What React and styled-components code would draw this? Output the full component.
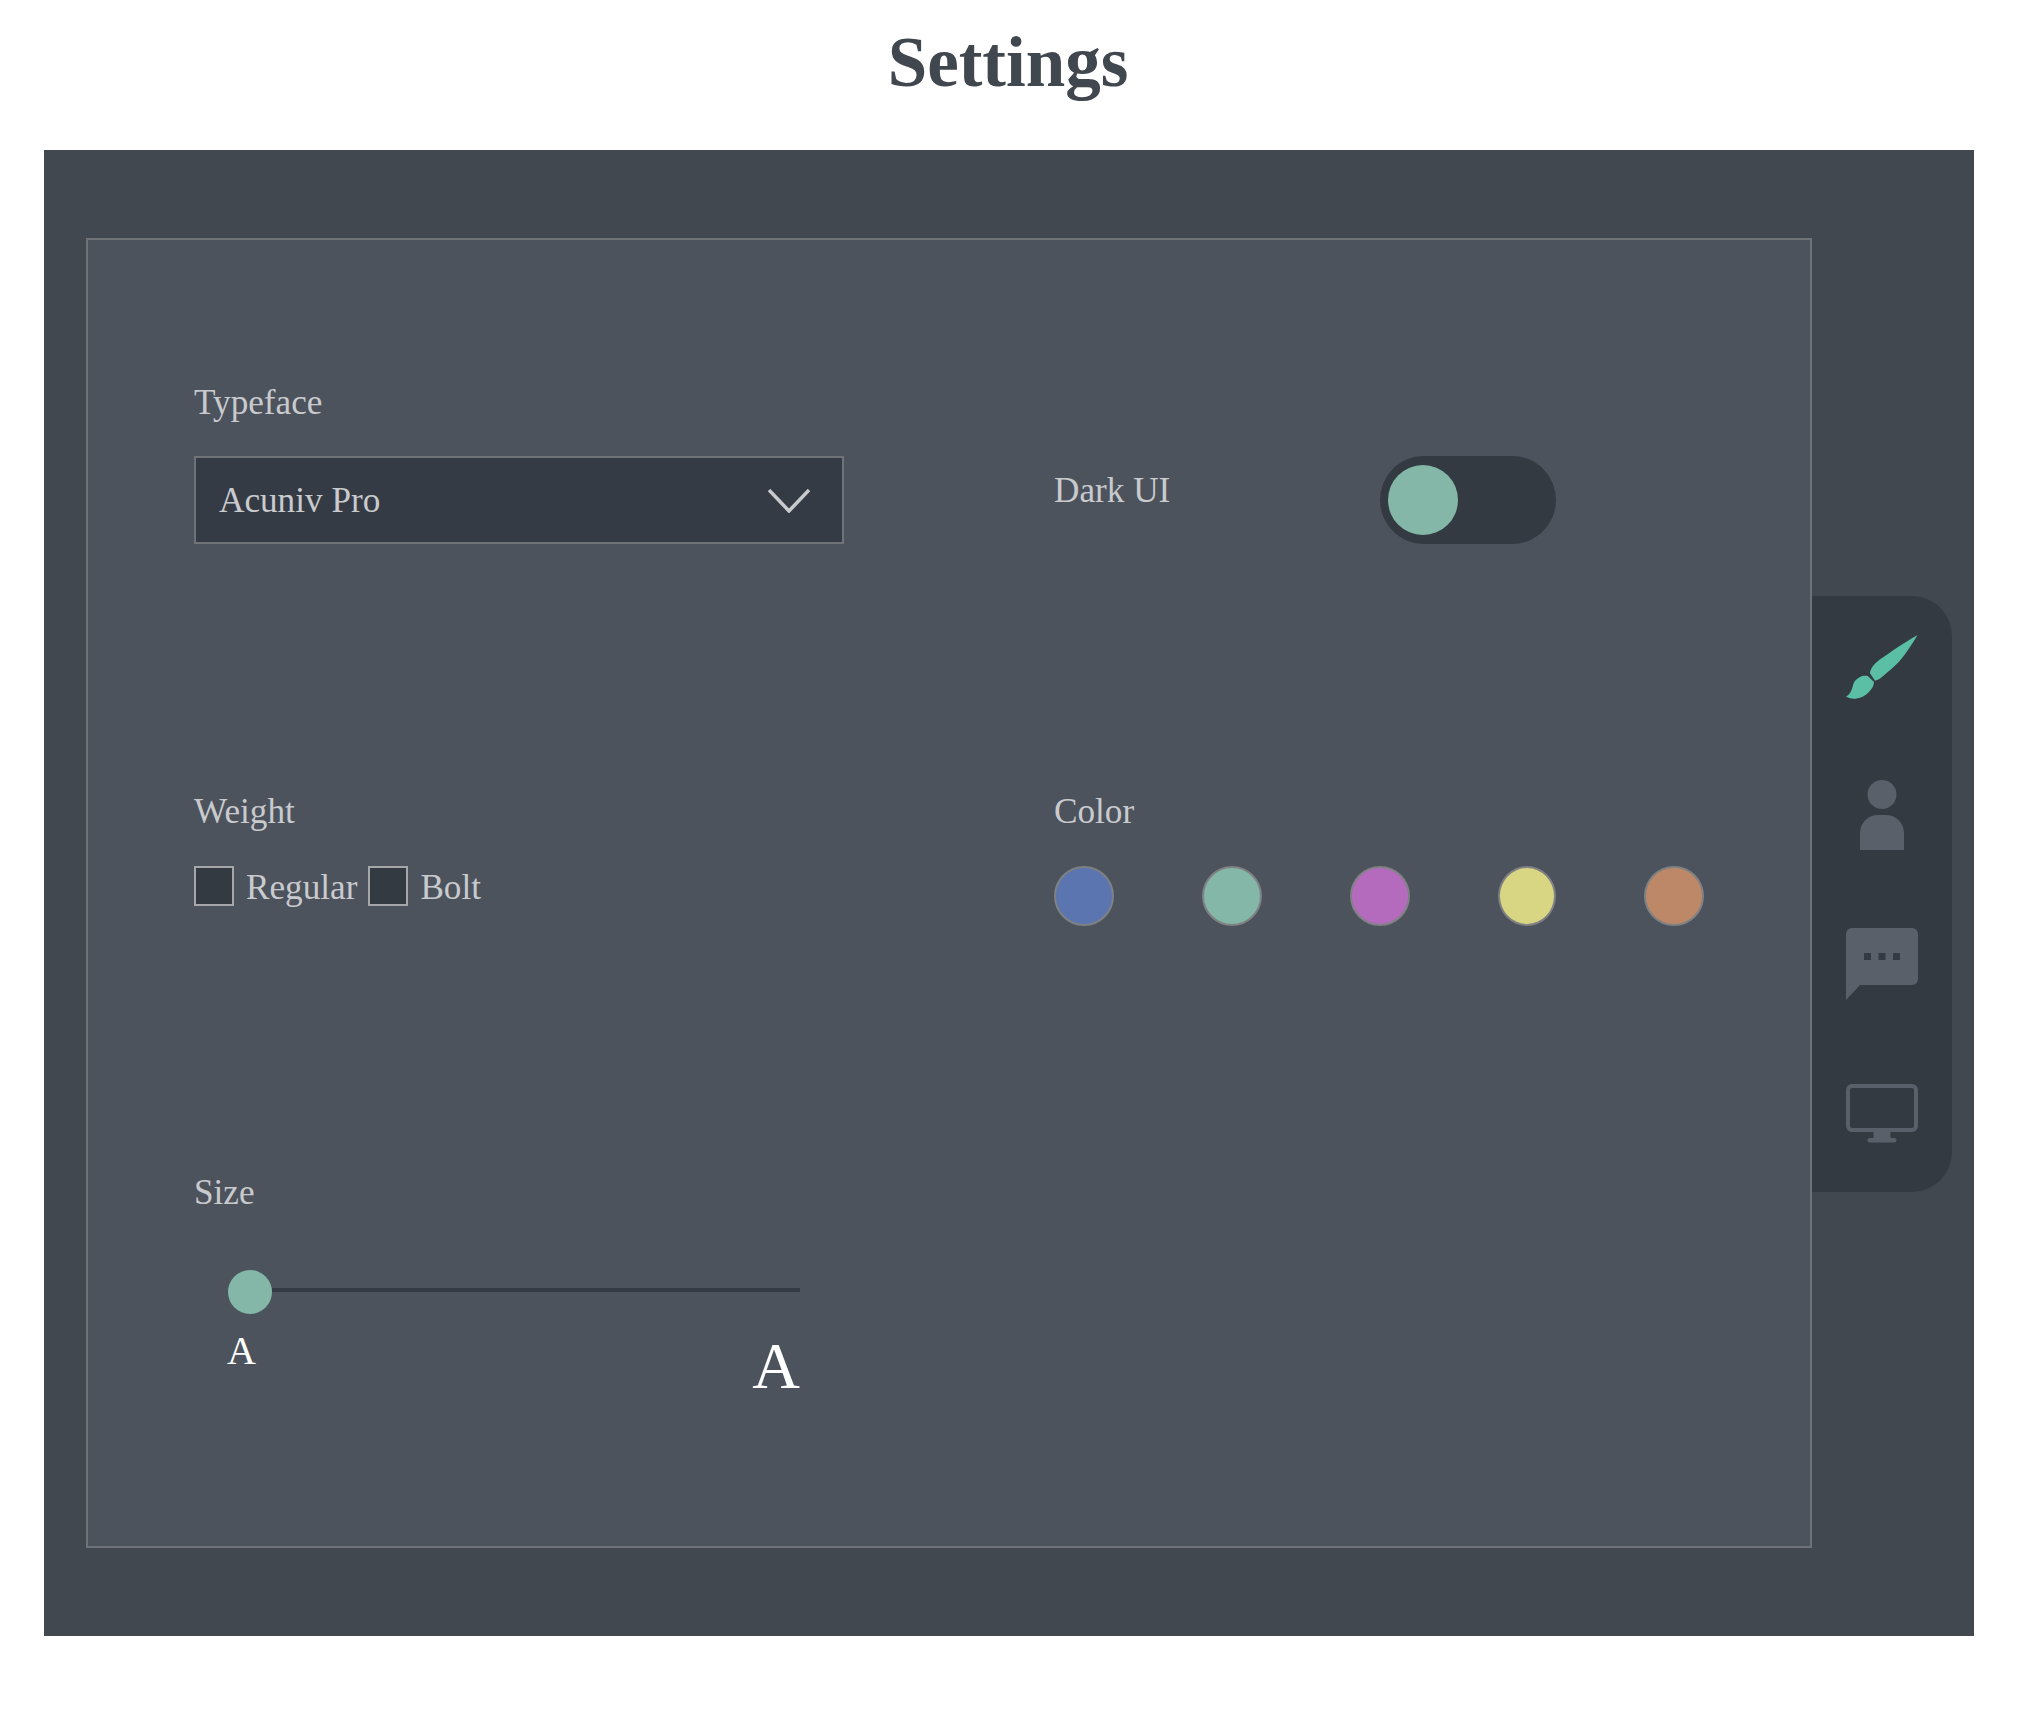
import styled, { createGlobalStyle } from 'styled-components';

const GlobalStyle = createGlobalStyle`
	body {
		margin: 0;
		background-color: #ffffff;
		font-family: 'Liberation Serif', 'Times New Roman', serif;
	}
`;

const Page = styled.div`
	width: 2022px;
	height: 1730px;
	overflow: hidden;
`;

const Title = styled.h1`
	margin: 0;
	height: 150px;
	padding: 22px 6px 0 0;
	box-sizing: border-box;
	text-align: center;
	font-size: 71px;
	line-height: 80px;
	font-weight: 700;
	color: #41474f;
`;

const Panel = styled.div`
	display: flex;
	align-items: flex-start;
	margin: 0 48px 0 44px;
	height: 1486px;
	padding: 88px 22px 0 42px;
	box-sizing: border-box;
	background-color: #42484f;
`;

const Card = styled.div`
	display: grid;
	grid-template-columns: 860px 1fr;
	grid-template-rows: 409px 381px 1fr;
	width: 1726px;
	height: 1310px;
	padding: 142px 0 0 106px;
	box-sizing: border-box;
	border: 2px solid #6f7277;
	background-color: #4c535d;
`;

const Field = styled.div`
	display: flex;
	flex-direction: column;
	align-items: flex-start;
`;

const Label = styled.div`
	padding-top: 1px;
	font-size: 35.2px;
	line-height: 40px;
	color: #c9cacd;
`;

const Select = styled.div`
	display: flex;
	align-items: center;
	justify-content: space-between;
	width: 650px;
	height: 88px;
	margin-top: 33px;
	padding: 2px 32px 0 23px;
	box-sizing: border-box;
	border: 2px solid #6f7277;
	background-color: #353b45;
	font-size: 35.2px;
	color: #c9cacd;
`;

const ToggleRow = styled.div`
	display: flex;
	align-items: flex-start;
	margin-top: 74px;
`;

const ToggleLabel = styled(Label)`
	width: 326px;
	padding-top: 15px;
`;

const Toggle = styled.div`
	display: flex;
	align-items: center;
	width: 176px;
	height: 88px;
	padding-left: 8px;
	box-sizing: border-box;
	border-radius: 44px;
	background-color: #343a42;
`;

const Knob = styled.div`
	width: ${props => props.$size}px;
	height: ${props => props.$size}px;
	border-radius: 50%;
	background-color: #84b7a7;
`;

const WeightRow = styled.div`
	display: flex;
	align-items: center;
	margin-top: 34px;
	font-size: 35.2px;
	color: #c9cacd;
`;

const Checkbox = styled.div`
	width: 40px;
	height: 40px;
	margin: -2px 12px 0 0;
	box-sizing: border-box;
	border: 2px solid #a5a7aa;
	background-color: #343a42;
`;

const WeightName = styled.span`
	padding-top: 2px;
	margin-right: 11px;
`;

const Swatches = styled.div`
	display: flex;
	gap: 88px;
	margin-top: 34px;
`;

const Swatch = styled.div`
	width: ${props => props.$width}px;
	height: 60px;
	box-sizing: border-box;
	border: 2px solid #7f8183;
	border-radius: 50%;
	background-color: ${props => props.$color};
`;

const Slider = styled.div`
	display: flex;
	align-items: center;
	width: 572px;
	margin-top: 57px;
	padding-left: 34px;
`;

const Track = styled.div`
	flex: 1;
	height: 4px;
	margin-top: -4px;
	background-color: #353b45;
`;

const SizeLetters = styled.div`
	display: flex;
	align-items: flex-start;
	justify-content: space-between;
	width: 573px;
	margin: 14px 0 0 33px;
	color: #ffffff;
`;

const SmallA = styled.span`
	font-size: 40px;
	line-height: 46px;
`;

const BigA = styled.span`
	font-size: 66px;
	line-height: 76px;
`;

const Sidebar = styled.nav`
	display: flex;
	flex-direction: column;
	align-items: center;
	width: 140px;
	height: 596px;
	margin-top: 358px;
	padding-top: 39px;
	box-sizing: border-box;
	border-radius: 0 40px 40px 0;
	background-color: #343a42;
`;

const NavItem = styled.div`
	height: ${props => props.$height}px;
`;

const Icon = styled.svg`
	display: block;
`;

const BrushIcon = () => (
	<Icon width="72" height="64" viewBox="0 0 72 64">
		<path
			fill="#5bbfa6"
			d="M71.5 0C60 7 50 13 43 18.300 36 23 30 27 27 31c-2 3-3 5-3 7.300L29 45.700c3-.7 5-2.200 7.300-4C43 36 49 31 53 26.700 60 19 66 9 71.500 0Z"
		/>
		<path
			fill="#5bbfa6"
			d="M21.800 41C18 40.500 16 41 14 42 10.500 44 8.500 46 7.500 48.500 6 54 5 59 0 61.500c4 2.200 7 2.500 10.500 2 5-.5 9-3 11.500-5.500C25.500 54.500 28 51 28 47Z"
		/>
	</Icon>
);

const PersonIcon = () => (
	<Icon width="44" height="70" viewBox="0 0 44 70">
		<circle cx="22" cy="14.500" r="14.500" fill="#5a6069" />
		<path fill="#5a6069" d="M0 70V53a18 18 0 0 1 18-18h8a18 18 0 0 1 18 18v17Z" />
	</Icon>
);

const ChatIcon = () => (
	<Icon width="72" height="72" viewBox="0 0 72 72">
		<path
			fill="#5a6069"
			d="M6 0h60a6 6 0 0 1 6 6v45a6 6 0 0 1-6 6H14L0 72V6a6 6 0 0 1 6-6Z"
		/>
		<rect x="18" y="25" width="7" height="7" fill="#343a42" />
		<rect x="32.500" y="25" width="7" height="7" fill="#343a42" />
		<rect x="47" y="25" width="7" height="7" fill="#343a42" />
	</Icon>
);

const MonitorIcon = () => (
	<Icon width="72" height="59" viewBox="0 0 72 59">
		<rect x="2" y="2" width="68" height="44" rx="4" fill="none" stroke="#5a6069" strokeWidth="4" />
		<rect x="27.500" y="48" width="17" height="6" fill="#5a6069" />
		<rect x="21.500" y="54" width="29" height="4.500" rx="2" fill="#5a6069" />
	</Icon>
);

const swatches = [
	{ color: '#5a75b0', width: 60 },
	{ color: '#84b7a7', width: 60 },
	{ color: '#b56bbd', width: 60 },
	{ color: '#d9d683', width: 58 },
	{ color: '#bc8867', width: 60 },
];

const App = () => {
	return (
		<Page>
			<GlobalStyle />
			<Title>Settings</Title>
			<Panel>
				<Card>
					<Field>
						<Label>Typeface</Label>
						<Select>
							Acuniv Pro
							<svg width="42" height="24" viewBox="0 0 42 24">
								<polyline points="1,1 21,22 41,1" fill="none" stroke="#c9cacd" strokeWidth="3.500" />
							</svg>
						</Select>
					</Field>
					<Field>
						<ToggleRow>
							<ToggleLabel>Dark UI</ToggleLabel>
							<Toggle>
								<Knob $size={70} />
							</Toggle>
						</ToggleRow>
					</Field>
					<Field>
						<Label>Weight</Label>
						<WeightRow>
							<Checkbox />
							<WeightName>Regular</WeightName>
							<Checkbox />
							<WeightName>Bolt</WeightName>
						</WeightRow>
					</Field>
					<Field>
						<Label>Color</Label>
						<Swatches>
							{swatches.map(swatch => (
								<Swatch key={swatch.color} $color={swatch.color} $width={swatch.width} />
							))}
						</Swatches>
					</Field>
					<Field>
						<Label>Size</Label>
						<Slider>
							<Knob $size={44} />
							<Track />
						</Slider>
						<SizeLetters>
							<SmallA>A</SmallA>
							<BigA>A</BigA>
						</SizeLetters>
					</Field>
				</Card>
				<Sidebar>
					<NavItem $height={145}>
						<BrushIcon />
					</NavItem>
					<NavItem $height={148}>
						<PersonIcon />
					</NavItem>
					<NavItem $height={156}>
						<ChatIcon />
					</NavItem>
					<NavItem $height={59}>
						<MonitorIcon />
					</NavItem>
				</Sidebar>
			</Panel>
		</Page>
	);
};

export default App;
